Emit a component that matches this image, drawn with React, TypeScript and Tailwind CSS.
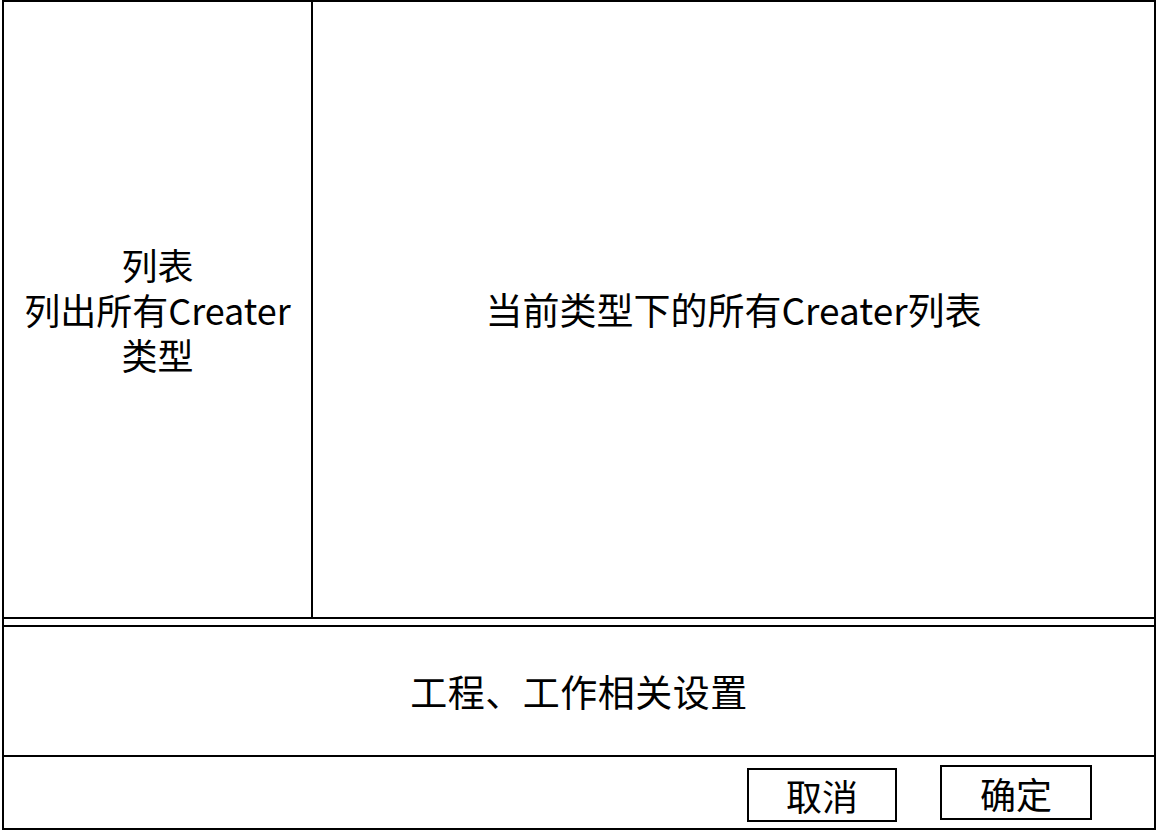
export default function App() {
  return (
    <div className="bg-white w-[1156px] h-[840px] font-['Noto_Sans_CJK_SC',sans-serif] text-black">
      <div className="ml-[2px] w-[1154px] h-[830px] border-2 border-black flex flex-col">
        {/* Top: type list + creater list */}
        <div className="h-[617px] border-b-2 border-black flex">
          <div className="w-[309px] border-r-2 border-black flex items-center justify-center px-3">
            <p className="text-[36px] leading-[45px] text-center">
              列表
              <br />
              列出所有Creater类型
            </p>
          </div>
          <div className="flex-1 flex items-center justify-center">
            <p className="text-[37px] leading-[45px]">当前类型下的所有Creater列表</p>
          </div>
        </div>

        <div className="h-[6px]" />

        {/* Settings */}
        <div className="h-[132px] border-y-2 border-black flex items-center justify-center">
          <p className="text-[37px] tracking-[0.5px] leading-[45px]">工程、工作相关设置</p>
        </div>

        {/* Buttons */}
        <div className="flex-1 flex items-start justify-end pr-[62px] gap-[43px]">
          <button className="mt-[11px] w-[150px] h-[54px] border-2 border-black text-[36px] leading-[48px]">
            取消
          </button>
          <button className="mt-[8px] w-[152px] h-[55px] border-2 border-black text-[36px] leading-[48px]">
            确定
          </button>
        </div>
      </div>
    </div>
  );
}
